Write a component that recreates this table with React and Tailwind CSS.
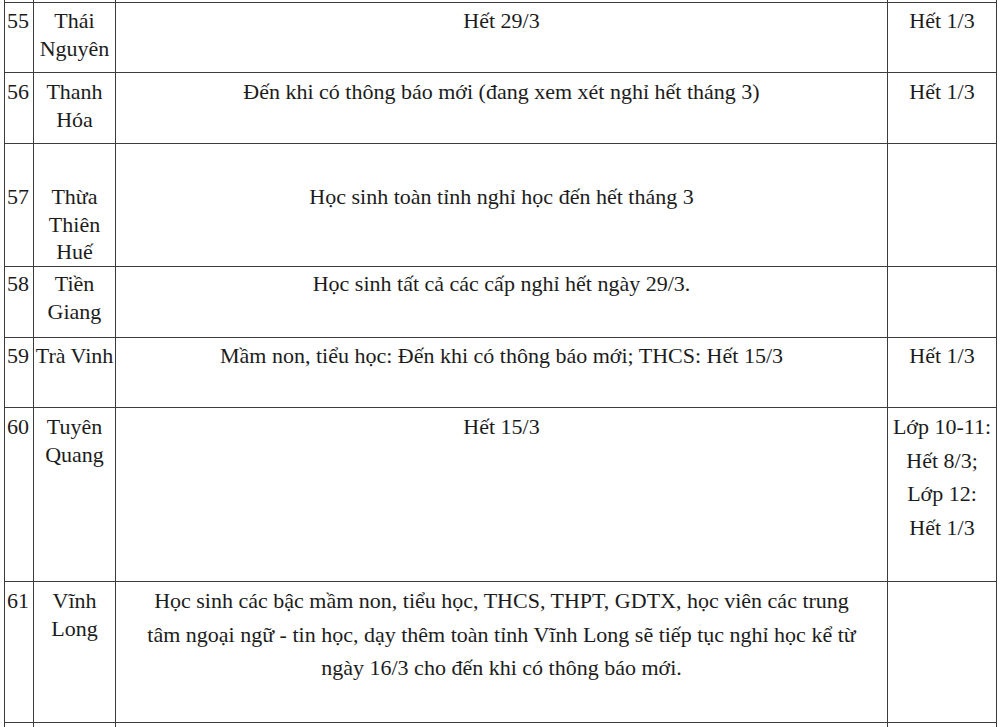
import React from 'react';
import clsx from 'clsx';

// Each row: padA is for the number/province columns, padB for the two text columns
const rows = [
    {
        no: '55',
        name: ['Thái', 'Nguyên'],
        detail: ['Hết 29/3'],
        last: ['Hết 1/3'],
        h: 'h-[70px]',
        padA: 'pt-[4px]',
        padB: 'pt-[1px]',
    },
    {
        no: '56',
        name: ['Thanh', 'Hóa'],
        detail: ['Đến khi có thông báo mới (đang xem xét nghỉ hết tháng 3)'],
        last: ['Hết 1/3'],
        h: 'h-[71px]',
        padA: 'pt-[5px]',
        padB: 'pt-[2px]',
    },
    {
        no: '57',
        name: ['Thừa', 'Thiên', 'Huế'],
        detail: ['Học sinh toàn tỉnh nghỉ học đến hết tháng 3'],
        last: [],
        h: 'h-[123px]',
        padA: 'pt-[39px]',
        padB: 'pt-[36px]',
    },
    {
        no: '58',
        name: ['Tiền', 'Giang'],
        detail: ['Học sinh tất cả các cấp nghỉ hết ngày 29/3.'],
        last: [],
        h: 'h-[71px]',
        padA: 'pt-[3px]',
        padB: 'pt-[0px]',
    },
    {
        no: '59',
        name: ['Trà Vinh'],
        detail: ['Mầm non, tiểu học: Đến khi có thông báo mới; THCS: Hết 15/3'],
        last: ['Hết 1/3'],
        h: 'h-[70px]',
        padA: 'pt-[4px]',
        padB: 'pt-[1px]',
    },
    {
        no: '60',
        name: ['Tuyên', 'Quang'],
        detail: ['Hết 15/3'],
        last: ['Lớp 10-11:', 'Hết 8/3;', 'Lớp 12:', 'Hết 1/3'],
        h: 'h-[174px]',
        padA: 'pt-[5px]',
        padB: 'pt-[2px]',
    },
    {
        no: '61',
        name: ['Vĩnh', 'Long'],
        detail: [
            'Học sinh các bậc mầm non, tiểu học, THCS, THPT, GDTX, học viên các trung',
            'tâm ngoại ngữ - tin học, dạy thêm toàn tỉnh Vĩnh Long sẽ tiếp tục nghỉ học kể từ',
            'ngày 16/3 cho đến khi có thông báo mới.',
        ],
        last: [],
        h: 'h-[141px]',
        padA: 'pt-[5px]',
        padB: 'pt-[2px]',
    },
    {
        no: '62',
        name: ['Vĩnh', 'Phúc'],
        detail: ['Học sinh nghỉ học đến hết ngày 22/3'],
        last: [],
        h: 'h-[80px]',
        padA: 'pt-[6px]',
        padB: 'pt-[3px]',
    },
];

const Lines = ({ lines }) =>
    lines.map((l, i) => (
        <div key={i} className="whitespace-nowrap [font-family:Liberation_Serif,serif]">
            {l}
        </div>
    ));

const Row = ({ r }) => (
    <div className={clsx('grid grid-cols-[29px_82px_772px_109px]', r.h)}>
        <div className={clsx('border-r border-b border-[#3c3c3c] pl-[2px] leading-[27.5px] [font-family:Liberation_Serif,serif]', r.padA)}>
            {r.no}
        </div>
        <div className={clsx('border-r border-b border-[#3c3c3c] text-center leading-[27.5px] [font-family:Liberation_Serif,serif]', r.padA)}>
            <Lines lines={r.name} />
        </div>
        <div className={clsx('border-r border-b border-[#3c3c3c] text-center leading-[33.5px] [font-family:Liberation_Serif,serif]', r.padB)}>
            <Lines lines={r.detail} />
        </div>
        <div className={clsx('border-r border-b border-[#3c3c3c] text-center leading-[33.5px] [font-family:Liberation_Serif,serif]', r.padB)}>
            <Lines lines={r.last} />
        </div>
    </div>
);

const App = () => {
    return (
        <div className="w-[1000px] h-[727px] overflow-hidden bg-white pl-[4px] text-[22px] text-[#1c1c1c] [font-family:Liberation_Serif,serif]">
            <div className="w-[993px] border-l border-[#3c3c3c]">
                {/* sliver of the row above, cut off by the screenshot */}
                <div className="grid grid-cols-[29px_82px_772px_109px] h-[3px]">
                    <div className="border-r border-b border-[#3c3c3c]" />
                    <div className="border-r border-b border-[#3c3c3c]" />
                    <div className="border-r border-b border-[#3c3c3c]" />
                    <div className="border-r border-b border-[#3c3c3c]" />
                </div>
                {rows.map((r) => (
                    <Row key={r.no} r={r} />
                ))}
            </div>
        </div>
    );
};

export default App;
